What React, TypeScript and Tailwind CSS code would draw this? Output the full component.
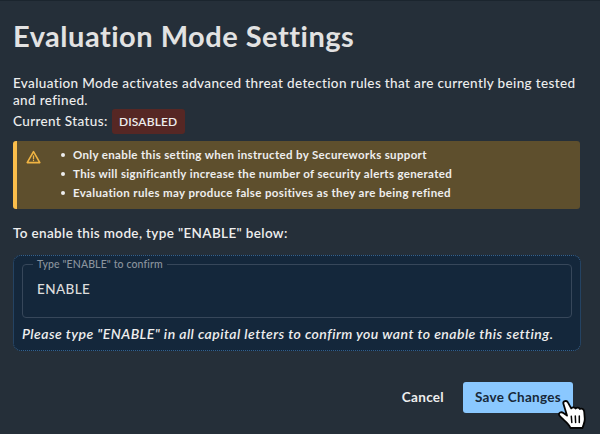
import React from "react";

const warnings = [
  { text: "Only enable this setting when instructed by Secureworks support", spacing: "tracking-[0.34px]" },
  { text: "This will significantly increase the number of security alerts generated", spacing: "tracking-[0.34px]" },
  { text: "Evaluation rules may produce false positives as they are being refined", spacing: "tracking-[0.36px]" },
];

function WarningIcon() {
  return (
    <svg className="mt-[9px] ml-[9px] h-[15px] w-[15px] shrink-0" viewBox="0 0 15 15" fill="none" stroke="#f0b443" strokeWidth="1.6" strokeLinejoin="round" strokeLinecap="round">
      <path d="M7.5 1.6 13.8 12.6H1.2Z" />
      <path d="M7.5 5.8V8.8M7.5 10.4V10.6" strokeWidth="1.3" />
    </svg>
  );
}

function HandCursor() {
  return (
    <svg className="absolute top-[396px] left-[556px] h-[34px] w-[32px]" viewBox="0 0 32 34" fill="#fff" stroke="#050505" strokeWidth="1.8" strokeLinejoin="round" strokeLinecap="round">
      <path d="M7.4 6.8C6.6 4.3 10.6 2.8 11.9 5.4L15.2 11.4C16.4 9.9 18.6 10.2 19.6 11.5C20.8 10.1 23 10.5 23.9 12C26 11.1 27.8 12.2 28.2 14.5L28.8 22C28.9 25.2 27.5 27.4 26.5 31H14.5C13.5 28.2 10.6 25.4 8 23.1C6.4 21.4 4.2 19.8 3.2 18.1C2.3 15.6 5.3 14.5 7.4 16L11 18.6Z" />
      <path d="M15.3 19.2 15.8 25.5M19.3 19 19.6 25.5M23.3 19 23.3 25.5" strokeWidth="1.5" />
    </svg>
  );
}

export default function App() {
  return (
    <main className="relative h-[434px] w-[600px] overflow-hidden border-t border-[#1b252e] bg-[#252f39] pr-[19px] pl-[13px] font-['Lato',sans-serif] text-[#eeeeee]">
      <h1 className="pt-[17px] text-[29px] leading-[36px] font-bold tracking-[0.5px] whitespace-nowrap text-[#e2e2e2]">Evaluation Mode Settings</h1>
      <p className="mt-[21px] text-[13.5px] leading-[17px] font-medium tracking-[0.36px] whitespace-nowrap">
        Evaluation Mode activates advanced threat detection rules that are currently being tested
        <br />
        and refined.
      </p>
      <div className="flex h-[25px] items-center text-[13.5px] font-medium tracking-[0.36px]">
        <span>Current Status:</span>
        <span className="ml-1 flex h-[25px] w-[73px] items-center justify-center rounded-[3px] bg-[#562724] text-[12px] font-semibold tracking-[0.15px]">DISABLED</span>
      </div>
      <section className="mt-[7px] flex h-[68px] w-[567px] rounded-[3px] border-l-4 border-[#fbbe4b] bg-[#5e4f2d]">
        <WarningIcon />
        <ul className="ml-[20px] pt-[4px] text-[11.5px] leading-[19px] font-bold">
          {warnings.map((w) => (
            <li key={w.text} className="flex items-center">
              <span className="mr-[8px] h-[4px] w-[4px] rounded-full bg-[#eeeeee]" />
              <span className={`whitespace-nowrap ${w.spacing}`}>{w.text}</span>
            </li>
          ))}
        </ul>
      </section>
      <p className="mt-[15px] text-[13.5px] leading-[18px] font-semibold tracking-[0.35px]">To enable this mode, type "ENABLE" below:</p>
      <section className="mt-[13px] h-[96px] w-[568px] rounded-[8px] border border-dotted border-[#35618c] bg-[#14273b] px-2">
        <fieldset className="h-[62px] rounded-[4px] border border-[#37475a] pl-[10px]">
          <legend className="h-[17px] px-[4px] text-[10.5px] leading-[17px] font-medium tracking-[0.12px] text-[#8b949e]">Type "ENABLE" to confirm</legend>
          <div className="pt-[6px] pl-[4px] text-[13.5px] leading-[20px] font-medium tracking-[0.4px] text-[#dddddd]">ENABLE</div>
        </fieldset>
        <p className="mt-[7px] text-[14px] leading-[18px] font-semibold tracking-[0.45px] whitespace-nowrap italic">Please type "ENABLE" in all capital letters to confirm you want to enable this setting.</p>
      </section>
      <footer className="mt-[31px] flex justify-end pr-[8px]">
        <button className="mr-[19px] text-[13.5px] font-bold tracking-[0.3px]">Cancel</button>
        <button className="h-[31px] w-[110px] rounded-[3px] bg-[#8ac8ff] text-[13.5px] font-bold tracking-[0.3px] text-[#17283a]">Save Changes</button>
      </footer>
      <HandCursor />
    </main>
  );
}
